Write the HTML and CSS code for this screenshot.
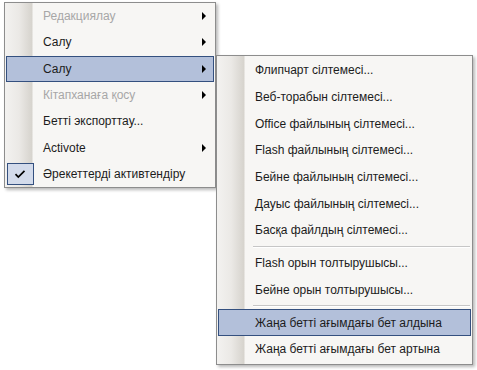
FILE: index.html
```html
<!DOCTYPE html>
<html lang="kk">
<head>
<meta charset="utf-8">
<link rel="stylesheet" href="styles.css">
</head>
<body>
<div class="stage">
  <ul class="menu main">
    <li class="item disabled"><span class="gut"></span><span class="label">Редакциялау</span><span class="arrow"></span></li>
    <li class="item"><span class="gut"></span><span class="label">Салу</span><span class="arrow"></span></li>
    <li class="item active"><span class="gut"></span><span class="label">Салу</span><span class="arrow"></span></li>
    <li class="item disabled"><span class="gut"></span><span class="label">Кітапханаға қосу</span><span class="arrow"></span></li>
    <li class="item"><span class="gut"></span><span class="label">Бетті экспорттау...</span></li>
    <li class="item"><span class="gut"></span><span class="label">Activote</span><span class="arrow"></span></li>
    <li class="item checked"><span class="gut"><span class="checkbox"><svg width="12" height="10" viewBox="0 0 12 10"><path d="M1.5 5.2 L4.3 8 L10.5 1.8" fill="none" stroke="#000" stroke-width="1.7"/></svg></span></span><span class="label">Әрекеттерді активтендіру</span></li>
  </ul>
  <ul class="menu sub">
    <li class="item"><span class="gut"></span><span class="label">Флипчарт сілтемесі...</span></li>
    <li class="item"><span class="gut"></span><span class="label">Веб-торабын сілтемесі...</span></li>
    <li class="item"><span class="gut"></span><span class="label">Office файлының сілтемесі...</span></li>
    <li class="item"><span class="gut"></span><span class="label">Flash файлының сілтемесі...</span></li>
    <li class="item"><span class="gut"></span><span class="label">Бейне файлының сілтемесі...</span></li>
    <li class="item"><span class="gut"></span><span class="label">Дауыс файлының сілтемесі...</span></li>
    <li class="item"><span class="gut"></span><span class="label">Басқа файлдың сілтемесі...</span></li>
    <li class="sep"></li>
    <li class="item"><span class="gut"></span><span class="label">Flash орын толтырушысы...</span></li>
    <li class="item"><span class="gut"></span><span class="label">Бейне орын толтырушысы...</span></li>
    <li class="sep"></li>
    <li class="item active"><span class="gut"></span><span class="label">Жаңа бетті ағымдағы бет алдына</span></li>
    <li class="item"><span class="gut"></span><span class="label">Жаңа бетті ағымдағы бет артына</span></li>
  </ul>
</div>
</body>
</html>
```
FILE: styles.css
```css
html, body {
  margin: 0;
  padding: 0;
  background: #ffffff;
}
body {
  width: 477px;
  height: 370px;
  overflow: hidden;
  font-family: "Liberation Sans", Arial, sans-serif;
  font-size: 12px;
  color: #1c1c1c;
}
.stage {
  position: relative;
  width: 477px;
  height: 370px;
}
.menu {
  list-style: none;
  margin: 0;
  padding: 0;
  box-sizing: border-box;
  border: 1px solid #8d8d8d;
  background-color: #f7f6f4;
  background-image: linear-gradient(to right, #f3f2f0 0px, #ebe9e6 14px, #d6d3cd 27px, #f7f6f4 28px);
  background-size: 28px 100%;
  background-repeat: no-repeat;
  box-shadow: 2px 2px 3px rgba(0, 0, 0, 0.28);
}
.main {
  margin-left: 4px;
  margin-top: 2px;
  width: 212px;
}
.sub {
  position: absolute;
  left: 216px;
  top: 53px;
  width: 257px;
  padding: 1px 0;
}
.item {
  display: flex;
  align-items: center;
  box-sizing: border-box;
  border: 1px solid transparent;
  margin: 0 1px;
}
.main .item { height: 26.3px; }
.sub .item { height: 26.7px; }
.gut {
  width: 27px;
  flex: none;
  display: flex;
  align-items: center;
  justify-content: center;
  align-self: stretch;
}
.label {
  flex: 1;
  padding-left: 9px;
  white-space: nowrap;
}
.disabled .label { color: #a7a7a7; }
.arrow {
  flex: none;
  width: 0;
  height: 0;
  border-left: 4px solid #000;
  border-top: 4px solid transparent;
  border-bottom: 4px solid transparent;
  margin-right: 7px;
}
.active {
  background: #b3c0da;
  border-color: #34507f;
}
.checked .gut { align-self: stretch; }
.checkbox {
  box-sizing: border-box;
  width: 27px;
  height: 22px;
  border: 1px solid #34507f;
  background: #d3dbeb;
  display: flex;
  align-items: center;
  justify-content: center;
  margin-left: -1px;
}
.sep {
  height: 6px;
  margin-left: 36px;
  margin-right: 2px;
  background: linear-gradient(#f7f6f4 0 2px, #c6c6c6 2px 3px, #ffffff 3px 4px, #f7f6f4 4px);
}
```
